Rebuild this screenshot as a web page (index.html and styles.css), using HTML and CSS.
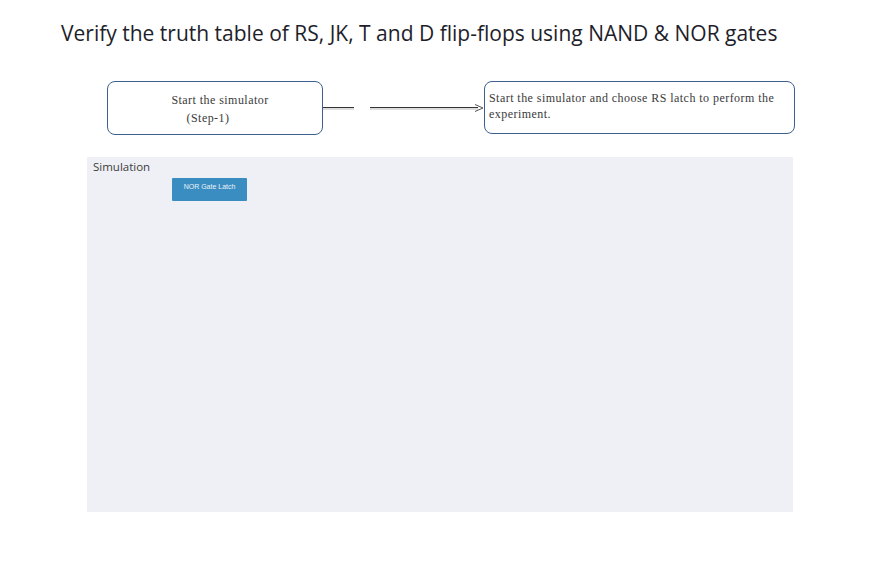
FILE: index.html
```html
<!DOCTYPE html>
<html>
<head>
<meta charset="utf-8">
<link rel="stylesheet" href="styles.css">
</head>
<body>
<div class="page">
  <h1 class="title">Verify the truth table of RS, JK, T and D flip-flops using NAND &amp; NOR gates</h1>
  <div class="flow">
    <div class="box box-step">
      <div class="step-line">Start the simulator</div>
      <div class="step-line step-num">(Step-1)</div>
    </div>
    <svg class="connector" width="161" height="53" viewBox="0 0 161 53">
      <line x1="0" y1="26.5" x2="31" y2="26.5" stroke="#333" stroke-width="1"/>
      <line x1="0" y1="28" x2="31" y2="28" stroke="#bbb" stroke-width="1"/>
      <line x1="47" y1="26.5" x2="155" y2="26.5" stroke="#333" stroke-width="1"/>
      <line x1="47" y1="28" x2="155" y2="28" stroke="#bbb" stroke-width="1"/>
      <path d="M152 23.5 L160 27 L152 30.5" fill="none" stroke="#555" stroke-width="1"/>
    </svg>
    <div class="box box-desc">Start the simulator and choose RS latch to perform the experiment.</div>
  </div>
  <div class="panel">
    <div class="panel-label">Simulation</div>
    <button class="btn">NOR Gate Latch</button>
  </div>
</div>
</body>
</html>
```
FILE: styles.css
```css
html, body {
  margin: 0;
  padding: 0;
  background: #ffffff;
}
.page {
  width: 884px;
  height: 569px;
  box-sizing: border-box;
  padding-top: 19px;
}
.title {
  margin: 0 0 0 61px;
  font-family: "Open Sans", sans-serif;
  font-weight: 400;
  font-size: 21px;
  line-height: 28px;
  color: #1e1e2a;
  white-space: nowrap;
}
.flow {
  display: flex;
  align-items: flex-start;
  margin-top: 34px;
  margin-left: 107px;
}
.box {
  box-sizing: border-box;
  border: 1px solid #3d5f8f;
  border-radius: 8px;
  font-family: "Liberation Serif", serif;
  font-size: 12px;
  letter-spacing: 0.45px;
  color: #3a3a3a;
  background: #fff;
}
.box-step {
  width: 216px;
  height: 54px;
  padding-top: 9px;
  text-align: center;
  line-height: 18px;
}
.step-line {
  padding-left: 10px;
}
.step-num {
  padding-left: 0;
  margin-right: 14px;
}
.connector {
  display: block;
  flex: none;
}
.box-desc {
  width: 311px;
  height: 53px;
  padding: 8px 4px 0 4px;
  line-height: 16px;
  margin-top: 0;
}
.panel {
  margin-top: 22px;
  margin-left: 87px;
  width: 706px;
  height: 355px;
  background: #eef0f5;
  box-sizing: border-box;
  padding: 2px 0 0 6px;
}
.panel-label {
  font-family: "Open Sans", sans-serif;
  font-size: 11.5px;
  line-height: 16px;
  color: #3c3c3c;
}
.btn {
  display: block;
  margin: 3px 0 0 79px;
  width: 75px;
  height: 23px;
  border: none;
  border-radius: 1px;
  background: #3a8dc0;
  color: #e8f2f8;
  font-family: "Liberation Sans", sans-serif;
  font-size: 7px;
  padding: 0 0 7px 0;
}
```
